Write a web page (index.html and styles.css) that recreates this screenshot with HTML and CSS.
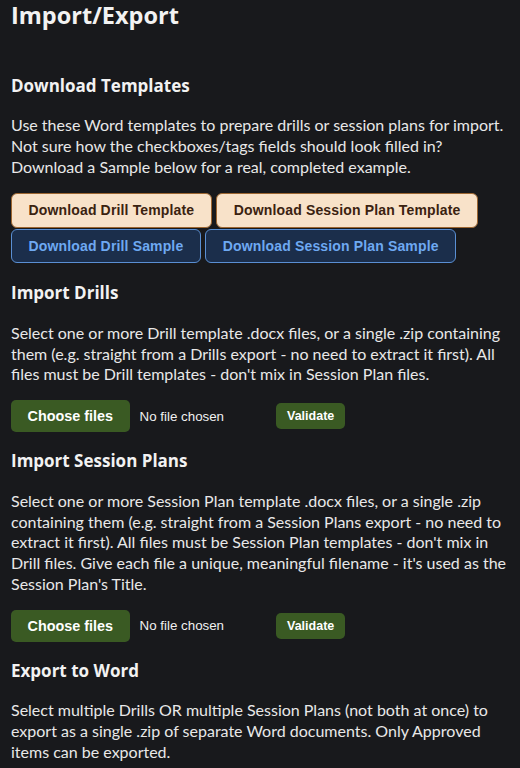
FILE: index.html
```html
<!DOCTYPE html>
<html lang="en">
<head>
<meta charset="utf-8">
<title>Import/Export</title>
<link rel="stylesheet" href="styles.css">
</head>
<body>
<main class="page">
  <h1 class="title">Import/Export</h1>

  <section class="block">
    <h2 class="heading">Download Templates</h2>
    <p class="desc">Use these Word templates to prepare drills or session plans for import. Not sure how the checkboxes/tags fields should look filled in? Download a Sample below for a real, completed example.</p>
    <div class="btn-grid">
      <div class="btn-row">
        <button class="btn btn-template">Download Drill Template</button>
        <button class="btn btn-template">Download Session Plan Template</button>
      </div>
      <div class="btn-row">
        <button class="btn btn-sample">Download Drill Sample</button>
        <button class="btn btn-sample">Download Session Plan Sample</button>
      </div>
    </div>
  </section>

  <section class="block">
    <h2 class="heading">Import Drills</h2>
    <p class="desc">Select one or more Drill template .docx files, or a single .zip containing them (e.g. straight from a Drills export - no need to extract it first). All files must be Drill templates - don't mix in Session Plan files.</p>
    <div class="file-row">
      <div class="file-input">
        <span class="file-btn">Choose files</span>
        <span class="file-name">No file chosen</span>
      </div>
      <button class="validate">Validate</button>
    </div>
  </section>

  <section class="block">
    <h2 class="heading">Import Session Plans</h2>
    <p class="desc">Select one or more Session Plan template .docx files, or a single .zip containing them (e.g. straight from a Session Plans export - no need to extract it first). All files must be Session Plan templates - don't mix in Drill files. Give each file a unique, meaningful filename - it's used as the Session Plan's Title.</p>
    <div class="file-row">
      <div class="file-input">
        <span class="file-btn">Choose files</span>
        <span class="file-name">No file chosen</span>
      </div>
      <button class="validate">Validate</button>
    </div>
  </section>

  <section class="block">
    <h2 class="heading">Export to Word</h2>
    <p class="desc">Select multiple Drills OR multiple Session Plans (not both at once) to export as a single .zip of separate Word documents. Only Approved items can be exported.</p>
  </section>
</main>
</body>
</html>
```

FILE: styles.css
```css
html, body {
  margin: 0;
  padding: 0;
  background: #18191c;
}

body {
  color: #e8e8e8;
  font-family: Lato, "Noto Sans", sans-serif;
}

.page {
  padding: 1px 11px 0;
}

.title {
  margin: 0;
  font-family: "Open Sans", "Noto Sans", sans-serif;
  font-size: 23.5px;
  line-height: 28.8px;
  font-weight: 700;
  color: #f2f2f2;
}

.block {
  padding-top: 18px;
}

.title + .block {
  padding-top: 45px;
}

.heading {
  margin: 0 0 19.5px;
  font-family: "Open Sans", "Noto Sans", sans-serif;
  font-size: 17px;
  line-height: 21.1px;
  font-weight: 700;
  color: #f2f2f2;
}

.desc {
  margin: 0 0 15px;
  font-size: 16px;
  line-height: 20.8px;
}

.btn-grid {
  display: flex;
  flex-direction: column;
  gap: 1px;
  margin-bottom: 1.5px;
}

.btn-row {
  display: flex;
  gap: 4.5px;
}

.btn {
  height: 35px;
  padding: 0 16.5px;
  border-radius: 6px;
  font-family: "Liberation Sans", Arial, sans-serif;
  font-size: 14px;
  letter-spacing: 0.15px;
  font-weight: 700;
  cursor: pointer;
}

.btn-template {
  background: #f8e2c9;
  border: 1px solid #9c6631;
  color: #3b2210;
}

.btn-sample {
  height: 34px;
  background: #1b2e4b;
  border: 1px solid #5a8fd3;
  color: #6ea9f2;
}

.file-row {
  display: flex;
  align-items: center;
  gap: 8px;
}

.file-input {
  display: flex;
  align-items: center;
  width: 257px;
}

.file-btn {
  display: flex;
  align-items: center;
  height: 32px;
  padding: 0 16.5px;
  border-radius: 5px;
  background: #3a5a23;
  color: #ffffff;
  font-family: "Liberation Sans", Arial, sans-serif;
  font-size: 14.4px;
  font-weight: 700;
}

.file-name {
  margin-left: 10px;
  font-family: "Liberation Sans", Arial, sans-serif;
  font-size: 13.33px;
  color: #f0f0f0;
}

.validate {
  height: 26px;
  padding: 0 11px;
  border: none;
  border-radius: 5px;
  background: #3a5a23;
  color: #ffffff;
  font-family: "Liberation Sans", Arial, sans-serif;
  font-size: 12.5px;
  font-weight: 700;
  cursor: pointer;
}
```
